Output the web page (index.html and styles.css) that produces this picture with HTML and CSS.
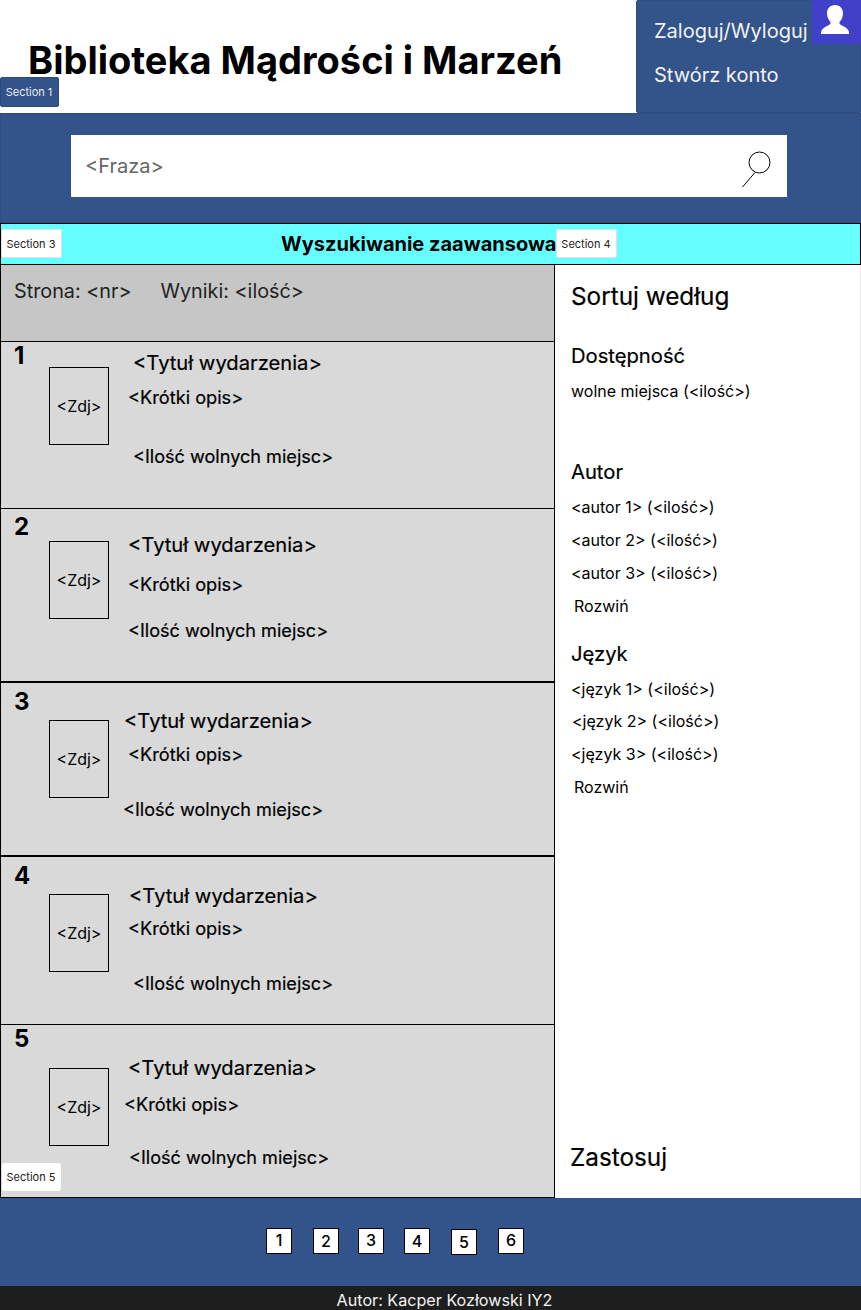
FILE: index.html
```html
<!DOCTYPE html>
<html lang="pl">
<head>
	<meta charset="utf-8">
	<title>Biblioteka Mądrości i Marzeń</title>
	<link rel="stylesheet" href="styles.css">
</head>
<body>

<header class="top">
	<h1 class="logo">Biblioteka Mądrości i Marzeń</h1>
	<span class="tag tag-blue tag-s1">Section 1</span>
	<nav class="account">
		<a class="account-link">Zaloguj/Wyloguj</a>
		<a class="account-link">Stwórz konto</a>
		<span class="avatar">
			<svg width="28" height="29" viewBox="0 0 28 29"><path fill="#fff" d="M14 0c-5 0-8 3.500-8 8.500 0 3.500 1.500 6.500 3.500 8.500v1.500C8 21 1 22 0 27v2h28v-2c-1-5-8-6-9.500-8.500V17c2-2 3.500-5 3.500-8.500C22 3.500 19 0 14 0z"/></svg>
		</span>
	</nav>
</header>

<section class="search">
	<div class="search-box">
		<span class="search-text">&lt;Fraza&gt;</span>
		<svg class="search-icon" width="32" height="42" viewBox="0 0 32 42"><circle cx="17.500" cy="17.500" r="10.500" fill="none" stroke="#000" stroke-width="1"/><path d="M13 27.500 .5 42" stroke="#000" stroke-width="1" fill="none"/></svg>
	</div>
</section>

<section class="advanced">
	<span class="tag tag-s3">Section 3</span>
	<b class="advanced-title">Wyszukiwanie zaawansowa</b>
	<span class="tag tag-s4">Section 4</span>
</section>

<main class="content">
	<section class="results">
		<div class="results-head">
			<span>Strona: &lt;nr&gt;</span>
			<span>Wyniki: &lt;ilość&gt;</span>
		</div>

		<article class="result r1">
			<div class="num">1</div>
			<div class="photo">&lt;Zdj&gt;</div>
			<div class="info">
				<div class="title">&lt;Tytuł wydarzenia&gt;</div>
				<div class="desc">&lt;Krótki opis&gt;</div>
				<div class="seats">&lt;Ilość wolnych miejsc&gt;</div>
			</div>
		</article>
		<article class="result r2">
			<div class="num">2</div>
			<div class="photo">&lt;Zdj&gt;</div>
			<div class="info">
				<div class="title">&lt;Tytuł wydarzenia&gt;</div>
				<div class="desc">&lt;Krótki opis&gt;</div>
				<div class="seats">&lt;Ilość wolnych miejsc&gt;</div>
			</div>
		</article>
		<article class="result r3">
			<div class="num">3</div>
			<div class="photo">&lt;Zdj&gt;</div>
			<div class="info">
				<div class="title">&lt;Tytuł wydarzenia&gt;</div>
				<div class="desc">&lt;Krótki opis&gt;</div>
				<div class="seats">&lt;Ilość wolnych miejsc&gt;</div>
			</div>
		</article>
		<article class="result r4">
			<div class="num">4</div>
			<div class="photo">&lt;Zdj&gt;</div>
			<div class="info">
				<div class="title">&lt;Tytuł wydarzenia&gt;</div>
				<div class="desc">&lt;Krótki opis&gt;</div>
				<div class="seats">&lt;Ilość wolnych miejsc&gt;</div>
			</div>
		</article>
		<article class="result r5">
			<div class="num">5</div>
			<div class="photo">&lt;Zdj&gt;</div>
			<div class="info">
				<div class="title">&lt;Tytuł wydarzenia&gt;</div>
				<div class="desc">&lt;Krótki opis&gt;</div>
				<div class="seats">&lt;Ilość wolnych miejsc&gt;</div>
			</div>
			<span class="tag tag-s5">Section 5</span>
		</article>
	</section>

	<aside class="filters">
		<h2 class="filters-title">Sortuj według</h2>

		<h3 class="group group-first">Dostępność</h3>
		<div class="opt opt-first">wolne miejsca (&lt;ilość&gt;)</div>

		<h3 class="group group-author">Autor</h3>
		<div class="opt opt-first">&lt;autor 1&gt; (&lt;ilość&gt;)</div>
		<div class="opt">&lt;autor 2&gt; (&lt;ilość&gt;)</div>
		<div class="opt">&lt;autor 3&gt; (&lt;ilość&gt;)</div>
		<div class="opt more">Rozwiń</div>

		<h3 class="group group-lang">Język</h3>
		<div class="opt opt-first">&lt;język 1&gt; (&lt;ilość&gt;)</div>
		<div class="opt opt-tight shifted">&lt;język 2&gt; (&lt;ilość&gt;)</div>
		<div class="opt">&lt;język 3&gt; (&lt;ilość&gt;)</div>
		<div class="opt more">Rozwiń</div>

		<div class="apply">Zastosuj</div>
	</aside>
</main>

<nav class="pager">
	<a class="page page-up">1</a>
	<a class="page">2</a>
	<a class="page page-up">3</a>
	<a class="page">4</a>
	<a class="page page-low">5</a>
	<a class="page page-up">6</a>
</nav>

<footer class="foot">Autor: Kacper Kozłowski IY2</footer>

</body>
</html>
```

FILE: styles.css
```css
*{box-sizing: border-box;}

body{margin: 0;width: 861px;font-family: "Inter", "Liberation Sans", sans-serif;color: #000;background: #fff;position: relative;}

/* little figma-style section labels */
.tag{position: absolute;display: flex;align-items: center;justify-content: center;height: 30px;padding-right: 1px;font-size: 11px;color: #222;background: #fff;border: 1px solid #e2e2e2;border-radius: 2px;}
.tag-blue{background: #33538b;color: #e8ecf4;border-color: #2c4a7c;}
.tag-s1{left: 0;top: 77px;width: 59px;}
.tag-s3{left: 0;top: 5px;width: 61px;height: 29px;}
.tag-s4{left: 555px;top: 5px;width: 61px;height: 29px;}
.tag-s5{left: 1px;bottom: 6px;width: 59px;height: 28px;border-color: #fff;}

.top{height: 113px;display: flex;justify-content: space-between;}
.logo{margin: 38px 0 0 28px;font-size: 38px;line-height: 44px;font-weight: 700;white-space: nowrap;}

.account{position: relative;width: 225px;background: #33538b;border: 1px solid #2f4d80;border-radius: 2px 0 0 2px;padding: 18px 0 0 17px;display: flex;flex-direction: column;gap: 20px;}
.account-link{font-size: 20px;line-height: 24px;color: #f2f2f2;}
.avatar{position: absolute;right: -1px;top: -1px;width: 49px;height: 44px;background: #4040c8;display: flex;justify-content: center;align-items: flex-start;padding: 5px 3px 0 0;}

.search{height: 110px;background: #33538b;border: 1px solid #2f4d80;padding: 21px 73px 25px 70px;}
.search-box{height: 62px;background: #fff;display: flex;align-items: center;justify-content: space-between;padding: 0 13px 0 14px;}
.search-text{font-size: 20px;color: #666;}

.advanced{position: relative;height: 42px;background: #66ffff;border: 1px solid #000;padding-left: 280px;line-height: 40px;white-space: nowrap;}
.advanced-title{font-size: 20px;}

.content{display: grid;grid-template-columns: 555px 306px;}

.results{border-left: 1px solid #000;}
.results-head{height: 76px;background: #c6c6c6;border-right: 1px solid #000;padding: 14px 0 0 13px;font-size: 19.8px;line-height: 24px;display: flex;gap: 29px;color: #222;}

.result{position: relative;display: flex;background: #d9d9d9;border-top: 1px solid #000;border-right: 1px solid #000;padding-left: 13px;height: var(--h);}
.r1{--h: 167px;--n: 0px;--photo: 25px;--top: 9px;--t-x: 25px;--d-gap: 11px;--d-x: 20px;--s-gap: 37px;--s-x: 25px;}
.r2{--h: 174px;--n: 4px;--photo: 32px;--top: 24px;--t-x: 20px;--d-gap: 16px;--d-x: 20px;--s-gap: 24px;--s-x: 20px;}
.r3{--h: 175px;--n: 5px;--photo: 37px;--top: 26px;--t-x: 16px;--d-gap: 10px;--d-x: 20px;--s-gap: 33px;--s-x: 15px;}
.r4{--h: 169px;--n: 5px;--photo: 37px;--top: 27px;--t-x: 21px;--d-gap: 9px;--d-x: 20px;--s-gap: 33px;--s-x: 25px;}
.r5{--h: 174px;--n: 0px;--photo: 43px;--top: 31px;--t-x: 20px;--d-gap: 13px;--d-x: 16px;--s-gap: 31px;--s-x: 21px;border-bottom: 1px solid #000;}
.r3,.r4{border-top-width: 2px;margin-top: -1px;}

.num{width: 35px;padding-top: var(--n);font-size: 24px;line-height: 27px;font-weight: 700;}
.photo{width: 60px;height: 78px;margin-top: var(--photo);border: 1px solid #000;display: flex;align-items: center;justify-content: center;font-size: 16px;}
.info{margin-left: -1px;padding-top: var(--top);-webkit-text-stroke: .2px #000;white-space: nowrap;}
.title{font-size: 20.2px;line-height: 24px;margin-left: var(--t-x);}
.desc{font-size: 18.2px;line-height: 22px;margin-top: var(--d-gap);margin-left: var(--d-x);}
.seats{font-size: 18.1px;line-height: 22px;margin-top: var(--s-gap);margin-left: var(--s-x);}

.filters{display: flex;flex-direction: column;padding: 16px 0 26px 16px;border-right: 1px solid #e6e6e6;}
.filters-title{margin: 0;font-size: 24.3px;line-height: 30px;font-weight: 400;-webkit-text-stroke: .2px #000;}
.group{margin: 0;font-size: 20.2px;line-height: 24px;font-weight: 400;-webkit-text-stroke: .2px #000;}
.group-first{margin-top: 33px;}
.group-author{margin-top: 59px;}
.group-lang{margin-top: 26px;}
.opt{font-size: 16px;line-height: 20px;margin-top: 13px;}
.opt-tight{margin-top: 12px;}
.shifted{margin-left: 1px;}
.more{margin-left: 3px;}
.apply{margin-top: auto;font-size: 24.3px;line-height: 30px;font-weight: 400;-webkit-text-stroke: .2px #000;margin-left: -1px;}

.pager{height: 88px;background: #33538b;padding: 30px 0 0 266px;display: flex;align-items: flex-start;gap: 21px;}
.page{width: 26px;height: 26px;background: #fff;border: 1px solid #000;display: flex;align-items: center;justify-content: center;font-size: 16px;font-weight: 500;}
.page:nth-child(2){margin-right: -2px;}
.page:nth-child(3){margin-right: -1px;}
.page-low{margin-top: 1px;}
.page-up{padding-bottom: 2px;}

.foot{height: 24px;background: #1e1e1e;color: #f4f4f4;font-size: 16.15px;line-height: 29px;text-align: center;padding-left: 28px;overflow: hidden;}
```
